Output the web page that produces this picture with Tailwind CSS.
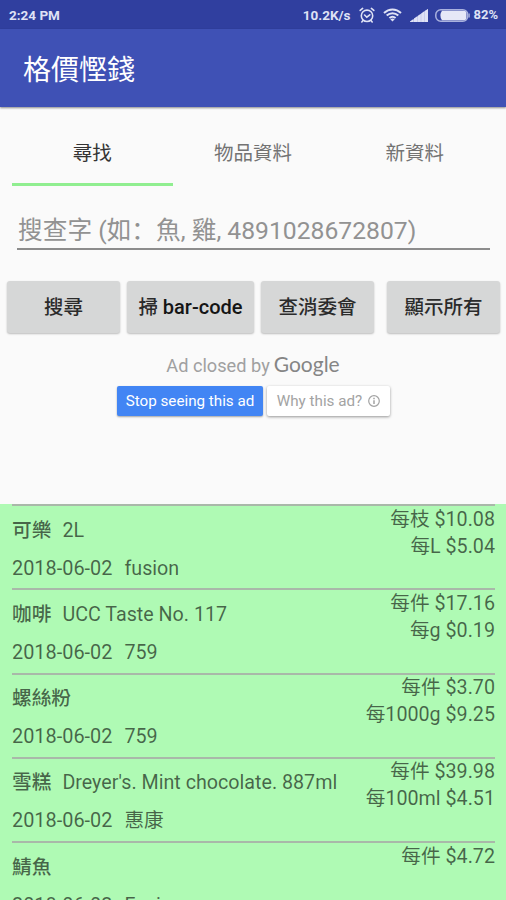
<!DOCTYPE html>
<html lang="zh-Hant">

<head>
    <meta charset="UTF-8">
    <title>格價慳錢</title>
    <script src="https://cdn.jsdelivr.net/npm/@tailwindcss/browser@4"></script>
</head>

<body class="bg-[#fafafa] h-[900px] overflow-hidden flex flex-col font-['Roboto','Noto_Sans_CJK_TC',sans-serif]">
    <!-- status bar -->
    <div class="h-[29px] shrink-0 bg-[#303f9f] text-[#dfe2f5] flex items-center justify-between pl-[9px] pr-2 pt-px text-[13.5px] font-bold">
        <span>2:24 PM</span>
        <div class="flex items-center">
            <span class="mr-[9px]">10.2K/s</span>
            <svg class="w-4 h-4 mr-2" viewBox="0 0 16 16" fill="none" stroke="currentColor" stroke-width="1.6" stroke-linecap="round">
                <circle cx="8" cy="8.8" r="5.7" />
                <path d="M1.2 3.4 3.6 1.4M14.8 3.4 12.4 1.4M5.6 8l2.2 2.2 3-2.4M4 13.5l-1.2 1.4M12 13.5l1.2 1.4" />
            </svg>
            <svg class="w-[19px] h-[14px] mr-2" viewBox="0 0 19 14" fill="none" stroke="currentColor" stroke-width="2">
                <path d="M1 5C6 .3 13 .3 18 5M3.7 7.6c3.4-3.2 8.2-3.2 11.6 0M6.4 10.1c1.9-1.7 4.3-1.7 6.2 0" />
                <path d="M9.5 13.6 7.3 11.3c1.3-1 3.1-1 4.4 0z" fill="currentColor" stroke="none" />
            </svg>
            <svg class="w-[18px] h-[13px] mr-[7px]" viewBox="0 0 18 13">
                <path d="M0 13 18 0v13z" fill="#a9b1de" />
                <path d="M0 13v-.6l3.4-2.4v3zM4 13V9.6l3.2-2.3V13zM7.6 13V7l3.2-2.3V13zM11.2 13V4.4l3-2.1V13zM14.6 13V2L18 0v13z" fill="currentColor" />
            </svg>
            <svg class="w-[35px] h-[13px] mr-[3px]" viewBox="0 0 35 13">
                <rect x=".8" y=".8" width="32" height="11.4" rx="5" fill="none" stroke="#a9b1de" stroke-width="1.5" />
                <path d="M7 1.8h21.5a3 3 0 0 1 3 3v3.400a3 3 0 0 1-3 3H7a8 8 0 0 1 0-9.400z" fill="#e6e8f7" />
                <path d="M33.5 4.5h1.3v4h-1.3z" fill="#a9b1de" />
            </svg>
            <span class="text-[13px]">82%</span>
        </div>
    </div>

    <!-- app bar -->
    <header class="h-[78px] shrink-0 bg-[#3f51b5] shadow-[0_1px_2px_rgba(0,0,0,0.45)] flex items-center pl-[23px] pt-[5px] text-[28px] text-white">格價慳錢</header>

    <!-- tabs -->
    <nav class="h-[79px] shrink-0 px-3 grid grid-cols-3 text-[19.5px] text-[#737373] text-center">
        <div class="h-[79px] border-b-[3px] border-[#90ee90] pt-[32px] leading-[30px] text-[#333]">尋找</div>
        <div class="pt-[32px] leading-[30px]">物品資料</div>
        <div class="pt-[32px] pl-[2px] leading-[30px]">新資料</div>
    </nav>

    <!-- search field -->
    <div class="mt-[22px] ml-[17px] mr-4 h-[42px] shrink-0 border-b-2 border-[#8c8c8c] pl-px text-[24.7px] leading-[46px] text-[#929292] whitespace-nowrap">搜查字 (如<span class="font-['Noto_Sans_CJK_SC',sans-serif] leading-none" lang="zh-Hans">：</span>魚, 雞, 4891028672807)</div>

    <div class="mt-[31px] h-[52px] shrink-0 pl-[7px] flex text-[19.5px] font-medium text-[#2b2b2b] leading-[53px] text-center whitespace-nowrap">
        <button class="w-[113px] mr-[7px] rounded-[3px] bg-[#d6d7d7] shadow-[0_1px_2px_rgba(0,0,0,0.25)]">搜尋</button>
        <button class="w-[127px] mr-[7px] rounded-[3px] bg-[#d6d7d7] shadow-[0_1px_2px_rgba(0,0,0,0.25)]">掃 <span class="text-[20px] text-[#151515]">bar-code</span></button>
        <button class="w-[113px] mr-[13px] rounded-[3px] bg-[#d6d7d7] shadow-[0_1px_2px_rgba(0,0,0,0.25)]">查消委會</button>
        <button class="w-[113px] rounded-[3px] bg-[#d6d7d7] shadow-[0_1px_2px_rgba(0,0,0,0.25)]">顯示所有</button>
    </div>

    <!-- closed ad -->
    <div class="h-[171px] shrink-0 pt-[17px]">
        <div class="h-[28px] flex items-baseline justify-center text-[18.2px] text-[#a0a0a0]">
            <span>Ad closed by</span>
            <span class="ml-1 font-['Lato'] text-[21px] leading-[28px] text-[#858585]">Google</span>
        </div>
        <div class="mt-[8px] pl-[117px] flex gap-1 text-[15.2px] leading-[30px] text-center">
            <div class="w-[146px] h-[30px] rounded-[2px] bg-[#4285f4] text-white shadow-[0_1px_2px_rgba(0,0,0,0.35)]">Stop seeing this ad</div>
            <div class="w-[123px] h-[30px] rounded-[2px] bg-white text-[#a3a3a3] shadow-[0_1px_3px_rgba(0,0,0,0.4)] flex items-center justify-center gap-[6px]">
                Why this ad?
                <svg class="w-[12px] h-[12px]" viewBox="0 0 12 12" fill="none" stroke="currentColor" stroke-width="1.2">
                    <circle cx="6" cy="6" r="5.3" />
                    <path d="M6 5.2v3.8M6 2.8v1.4" stroke-width="1.5" />
                </svg>
            </div>
        </div>
    </div>

    <!-- price list -->
    <main id="price-list" class="flex-1 pl-3 pr-[11px] bg-[#affab4] text-[19.7px] text-black/60"></main>

    <script>
        const items = [
            { name: '可樂', detail: '2L', date: '2018-06-02', shop: 'fusion', prices: ['每枝 $10.08', '每L $5.04'] },
            { name: '咖啡', detail: 'UCC Taste No. 117', date: '2018-06-02', shop: '759', prices: ['每件 $17.16', '每g $0.19'] },
            { name: '螺絲粉', detail: '', date: '2018-06-02', shop: '759', prices: ['每件 $3.70', '每1000g $9.25'] },
            { name: '雪糕', detail: "Dreyer's. Mint chocolate. 887ml", date: '2018-06-02', shop: '惠康', prices: ['每件 $39.98', '每100ml $4.51'] },
            { name: '鯖魚', detail: '', date: '2018-06-02', shop: 'Fusion', prices: ['每件 $4.72'] },
        ];

        document.getElementById('price-list').innerHTML = items.map(item => `
            <div class="h-[84.3px] border-t-2 border-[#a9b8a9] flex justify-between whitespace-nowrap">
                <div class="pt-[5.5px] leading-[38px]">
                    <div class="flex gap-[11px]"><span class="font-medium">${item.name}</span><span>${item.detail}</span></div>
                    <div class="flex gap-[12px]"><span class="text-[19.9px]">${item.date}</span><span>${item.shop}</span></div>
                </div>
                <div class="-mt-[0.5px] text-right leading-[27px]">
                    ${item.prices.map(price => `<div>${price}</div>`).join('')}
                </div>
            </div>
        `).join('');
    </script>
</body>

</html>
